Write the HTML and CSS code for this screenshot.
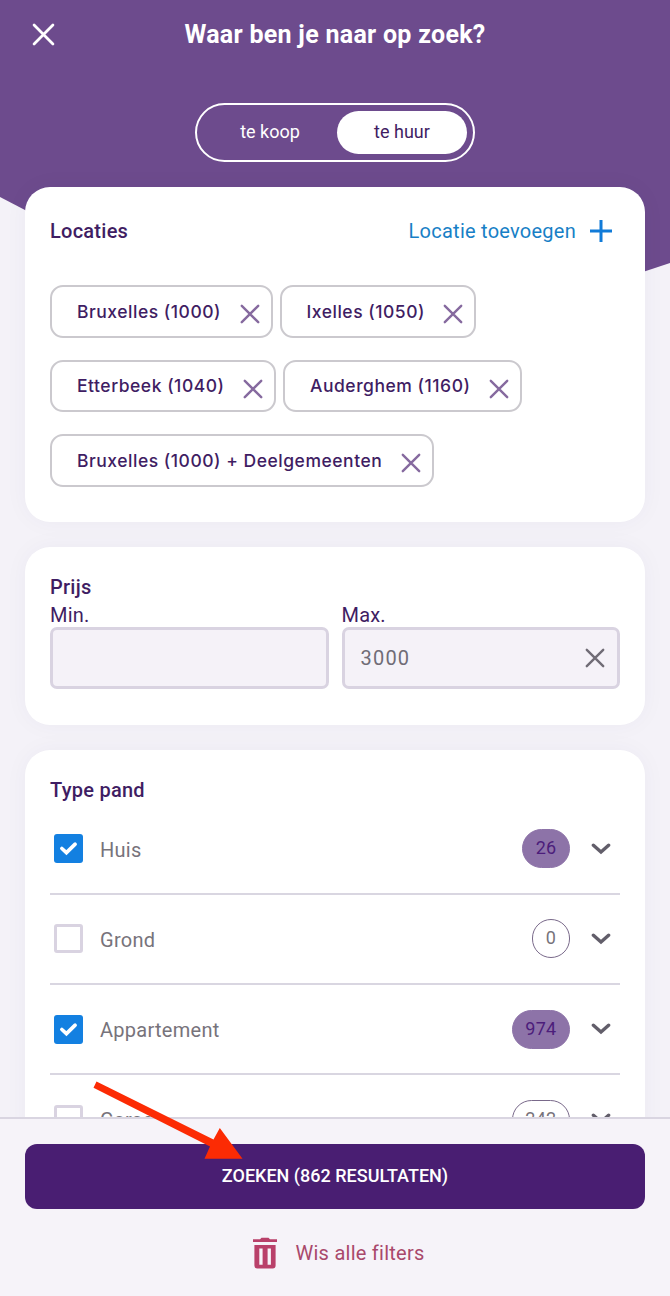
FILE: index.html
```html
<!DOCTYPE html>
<html lang="nl">
<head>
    <meta charset="UTF-8">
    <meta name="viewport" content="width=device-width, initial-scale=1.0">
    <title>Waar ben je naar op zoek?</title>
    <link rel="stylesheet" href="styles.css">
</head>
<body>
    <svg class="symbols" width="0" height="0">
        <symbol id="cross" viewBox="0 0 20 20"><path d="M1.8 1.8 18.2 18.2M18.2 1.8 1.8 18.2"/></symbol>
        <symbol id="check" viewBox="0 0 28 28"><path d="M7.6 14 12 18 20.4 9.8"/></symbol>
        <symbol id="chevron" viewBox="0 0 20 12"><path d="M2.4 2.2 10 9 17.6 2.2"/></symbol>
    </svg>

    <div class="page">
        <div class="background"></div>

        <div class="header">
            <button class="close"><svg class="icon"><use href="#cross"/></svg></button>
            <h1>Waar ben je naar op zoek?</h1>
        </div>

        <div class="toggle">
            <button class="toggle-option">te koop</button>
            <button class="toggle-option active">te huur</button>
        </div>

        <div class="card locations">
            <div class="card-header">
                <h2>Locaties</h2>
                <a class="add-location">Locatie toevoegen
                    <svg class="plus" viewBox="0 0 22 22"><path d="M11 0V22M0 11H22"/></svg>
                </a>
            </div>
            <div class="chips">
                <span class="chip">Bruxelles (1000)<svg class="icon"><use href="#cross"/></svg></span>
                <span class="chip">Ixelles (1050)<svg class="icon"><use href="#cross"/></svg></span>
                <span class="chip">Etterbeek (1040)<svg class="icon"><use href="#cross"/></svg></span>
                <span class="chip">Auderghem (1160)<svg class="icon"><use href="#cross"/></svg></span>
                <span class="chip">Bruxelles (1000) + Deelgemeenten<svg class="icon"><use href="#cross"/></svg></span>
            </div>
        </div>

        <div class="card price">
            <h2>Prijs</h2>
            <div class="price-fields">
                <div class="field">
                    <label>Min.</label>
                    <div class="input"></div>
                </div>
                <div class="field">
                    <label>Max.</label>
                    <div class="input">3000<svg class="icon"><use href="#cross"/></svg></div>
                </div>
            </div>
        </div>

        <div class="card types">
            <h2>Type pand</h2>
            <div class="type">
                <span class="checkbox checked"><svg class="check"><use href="#check"/></svg></span>
                <span class="type-name">Huis</span>
                <span class="count filled">26</span>
                <svg class="chevron"><use href="#chevron"/></svg>
            </div>
            <div class="type">
                <span class="checkbox"></span>
                <span class="type-name">Grond</span>
                <span class="count">0</span>
                <svg class="chevron"><use href="#chevron"/></svg>
            </div>
            <div class="type">
                <span class="checkbox checked"><svg class="check"><use href="#check"/></svg></span>
                <span class="type-name">Appartement</span>
                <span class="count filled">974</span>
                <svg class="chevron"><use href="#chevron"/></svg>
            </div>
            <div class="type">
                <span class="checkbox"></span>
                <span class="type-name">Garage</span>
                <span class="count">242</span>
                <svg class="chevron"><use href="#chevron"/></svg>
            </div>
        </div>

        <div class="footer">
            <button class="search">ZOEKEN (862 RESULTATEN)</button>
            <a class="clear">
                <svg class="trash" viewBox="0 0 26 32">
                    <path d="M1 2.2H8L9.5.8H16.5L18 2.2H25V5H1ZM2.4 8H23.6V28.5Q23.6 31.4 20.7 31.4H5.3Q2.4 31.4 2.4 28.5ZM7.3 11.5V27.8H10.6V11.5ZM15.6 11.5V27.8H18.9V11.5Z" fill-rule="evenodd"/>
                </svg>
                Wis alle filters
            </a>
        </div>

        <svg class="arrow" viewBox="0 0 152 82">
            <path d="M4.5.5 121.5 58.5 127.8 47 150.5 77.7H112.5L118 65.5 1.5 6.7Z"/>
        </svg>
    </div>
</body>
</html>
```
FILE: styles.css
```css
* {
    box-sizing: border-box;
}

body {
    margin: 0;
    font-family: Roboto, "Liberation Sans", sans-serif;
    color: #3f1d63;
    background-color: #f4f2f8;
}

button {
    padding: 0;
    border: none;
    background: none;
    font-family: inherit;
}

h1,
h2 {
    margin: 0;
}

.symbols {
    position: absolute;
}

.page {
    position: relative;
    height: 1296px;
    padding: 0 25px;
    overflow: hidden;
}

.background {
    position: absolute;
    top: 0;
    left: 0;
    width: 100%;
    height: 373px;
    background-color: #6d4b8d;
    clip-path: polygon(0 0, 100% 0, 100% 263px, 338px 373px, 0 197px);
}

.icon {
    width: 20px;
    height: 20px;
    fill: none;
    stroke: currentColor;
    stroke-width: 2.4;
    stroke-linecap: round;
}

.header {
    position: relative;
    display: flex;
    align-items: center;
    height: 68px;
}

.header h1 {
    flex: 1;
    margin-right: 37px;
    text-align: center;
    font-size: 25px;
    font-weight: 700;
    letter-spacing: 0.28px;
    color: white;
}

.close {
    display: flex;
    width: 37px;
    padding-left: 7px;
    color: white;
}

.close .icon {
    width: 23px;
    height: 23px;
}

.toggle {
    position: relative;
    display: flex;
    width: 280px;
    height: 59px;
    margin: 35px auto 25px;
    padding: 6px;
    border: 2px solid white;
    border-radius: 30px;
}

.toggle-option {
    flex: 1;
    height: 43px;
    padding-bottom: 2px;
    border-radius: 22px;
    font-size: 18px;
    color: white;
}

.toggle-option.active {
    flex: 0 0 130px;
    background-color: white;
    color: #3f1d63;
}

.card {
    position: relative;
    margin-bottom: 25px;
    padding: 0 25px;
    border-radius: 25px;
    background-color: white;
    box-shadow: 0 0 25px rgba(63, 29, 99, 0.04);
}

.card h2 {
    font-size: 20px;
    font-weight: 500;
    line-height: 28px;
    letter-spacing: 0.25px;
}

.locations {
    height: 335.4px;
    padding-top: 29px;
}

.card-header {
    display: flex;
    justify-content: space-between;
    align-items: center;
    height: 30px;
}

.add-location {
    display: flex;
    align-items: center;
    gap: 14px;
    padding-right: 8px;
    font-size: 20px;
    letter-spacing: 0.25px;
    color: #187fc6;
}

.plus {
    width: 22px;
    height: 22px;
    fill: none;
    stroke: #117bd8;
    stroke-width: 3;
}

.chips {
    display: flex;
    flex-wrap: wrap;
    gap: 22px 7px;
    margin-top: 39px;
}

.chip {
    display: flex;
    align-items: center;
    height: 52.6px;
    padding: 0 11px 0 25px;
    border: 2px solid #cbc9ce;
    border-radius: 13px;
    font-family: Inter, sans-serif;
    font-size: 17.5px;
    font-weight: 450;
    letter-spacing: 0.52px;
}

.chip .icon {
    margin: 6px 0 0 18.5px;
    color: #866a9f;
}

.price {
    height: 178px;
    padding-top: 26px;
}

.price-fields {
    display: flex;
    gap: 13px;
}

.field {
    flex: 1;
}

.field label {
    display: block;
    height: 26px;
    font-size: 20px;
    line-height: 28px;
    letter-spacing: 0.2px;
}

.input {
    display: flex;
    justify-content: space-between;
    align-items: center;
    height: 62px;
    padding: 0 12px 0 16px;
    border: 3px solid #d9d3e1;
    border-radius: 7px;
    background-color: #f5f2f8;
    font-size: 20px;
    letter-spacing: 1.2px;
    color: #706c76;
}

.types {
    height: 500px;
    padding-top: 26px;
}

.type {
    display: flex;
    align-items: center;
    height: 90.3px;
    border-bottom: 2px solid #d9d6e1;
    padding: 0 9px 0 4px;
}

.checkbox {
    width: 29px;
    height: 29px;
    border: 3px solid #d9d3e1;
    border-radius: 3px;
}

.checkbox.checked {
    border: none;
    background-color: #1380e1;
}

.check {
    display: block;
    width: 29px;
    height: 29px;
    fill: none;
    stroke: white;
    stroke-width: 3.5;
    stroke-linecap: round;
}

.type-name {
    flex: 1;
    margin-left: 17px;
    padding-top: 2px;
    font-size: 20px;
    letter-spacing: 0.27px;
    color: #77737b;
}

.count {
    min-width: 38px;
    height: 39px;
    padding: 0 12.5px;
    border: 1.5px solid #79698a;
    border-radius: 20px;
    text-align: center;
    font-size: 18px;
    line-height: 36px;
    letter-spacing: 0.3px;
    color: #77737b;
}

.count.filled {
    border-color: #8d73a8;
    background-color: #8d73a8;
    color: #4c1d7b;
}

.chevron {
    width: 20px;
    height: 12px;
    margin-left: 21px;
    fill: none;
    stroke: #625e6a;
    stroke-width: 3.4;
    stroke-linecap: round;
}

.footer {
    position: absolute;
    left: 0;
    bottom: 0;
    width: 100%;
    height: 179px;
    padding: 25px 25px 0;
    border-top: 2px solid #d9d5e1;
    background-color: #f6f3f9;
}

.search {
    display: block;
    width: 100%;
    height: 65px;
    padding-bottom: 2px;
    border-radius: 12px;
    background-color: #491e72;
    font-size: 18px;
    font-weight: 500;
    color: white;
}

.clear {
    display: flex;
    justify-content: center;
    align-items: center;
    gap: 18px;
    margin-top: 27px;
    padding-left: 6px;
    font-size: 20px;
    line-height: 34px;
    letter-spacing: 0.25px;
    color: #a9486b;
}

.trash {
    width: 26px;
    height: 32px;
    margin-bottom: 1px;
    fill: #b9406a;
}

/* pointer towards the search button */
.arrow {
    position: absolute;
    top: 1081px;
    left: 92px;
    width: 152px;
    height: 82px;
    overflow: visible;
    fill: #fc2b04;
}
```
